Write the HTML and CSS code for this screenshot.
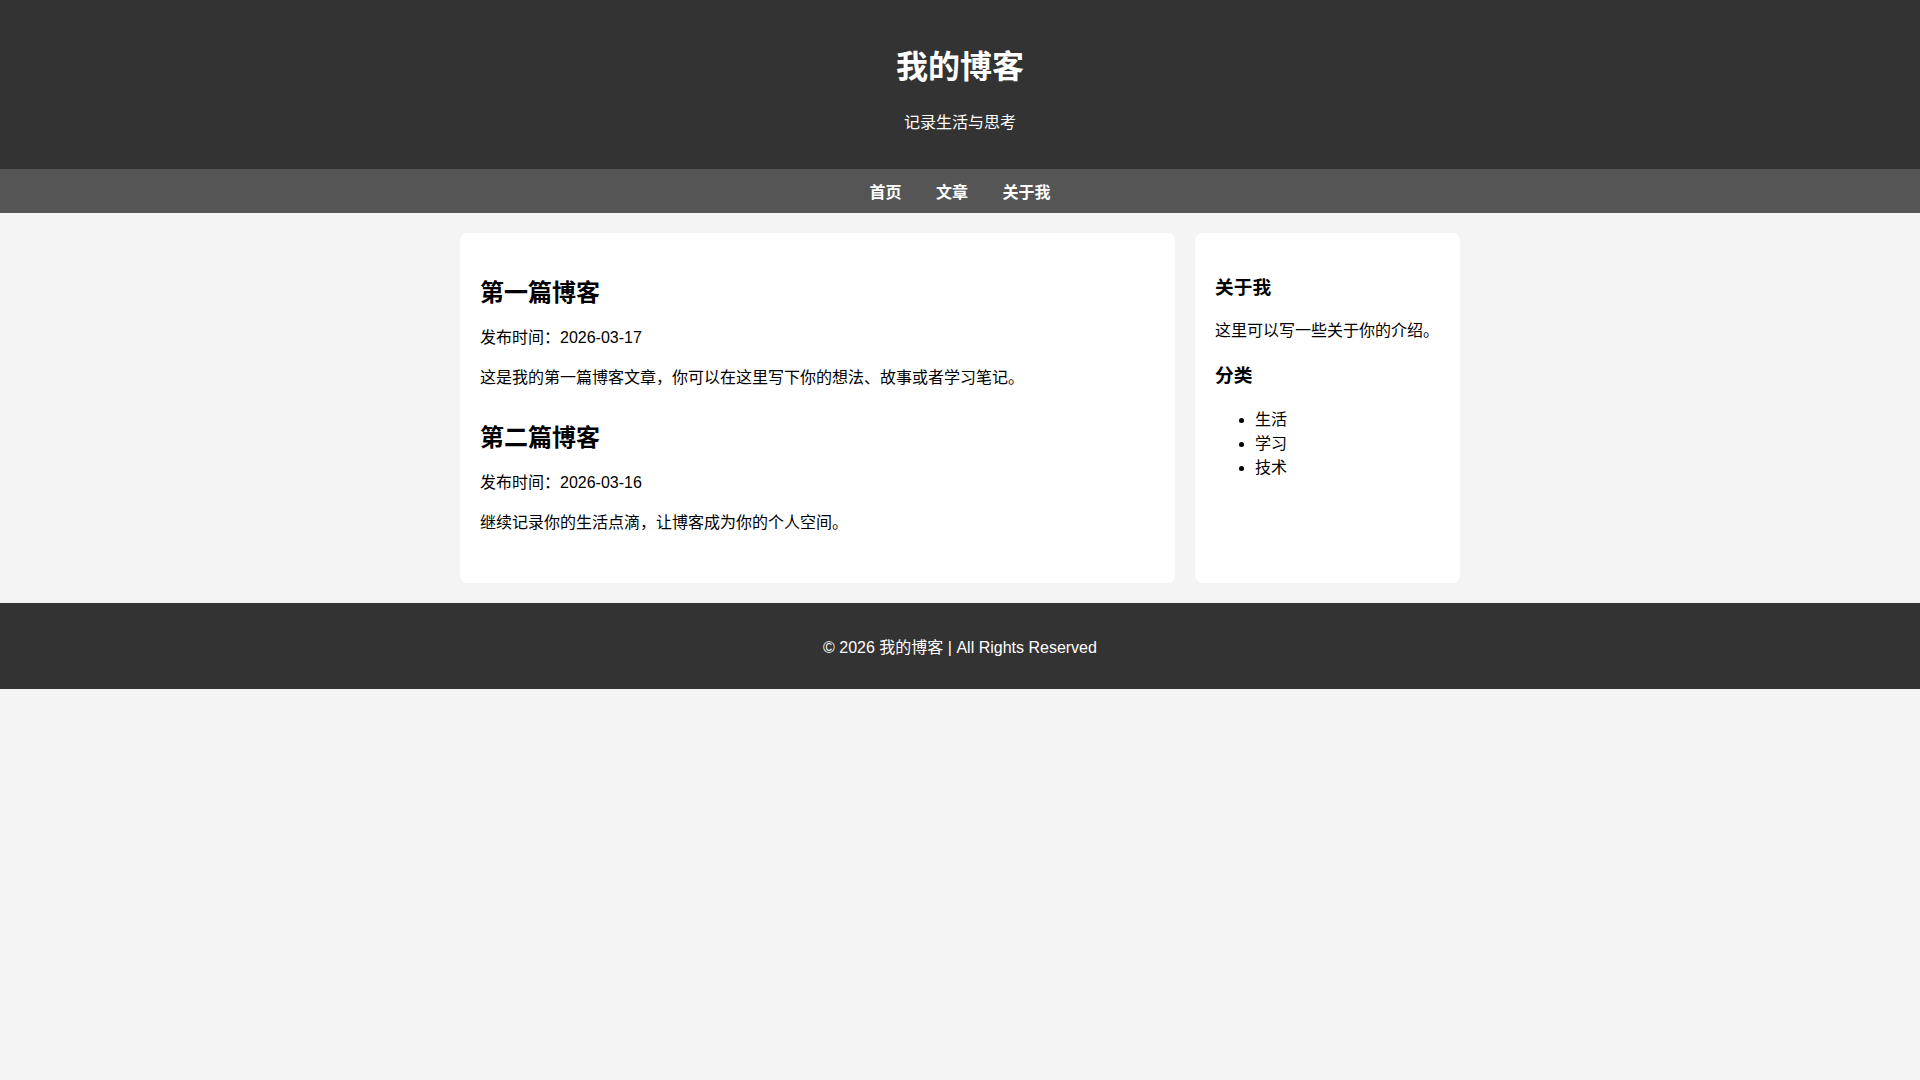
FILE: index.html
```html
<!DOCTYPE html>
<html lang="zh-CN">
<head>
<meta charset="UTF-8">
<title>我的博客</title>
<link rel="stylesheet" href="styles.css">
</head>
<body>
<header class="site-header">
  <h1 class="site-title">我的博客</h1>
  <p class="site-subtitle">记录生活与思考</p>
</header>
<nav class="site-nav">
  <a href="#">首页</a>
  <a href="#">文章</a>
  <a href="#">关于我</a>
</nav>
<div class="container">
  <main class="content">
    <article class="post">
      <h2>第一篇博客</h2>
      <p class="date">发布时间：2026-03-17</p>
      <p>这是我的第一篇博客文章，你可以在这里写下你的想法、故事或者学习笔记。</p>
    </article>
    <article class="post">
      <h2>第二篇博客</h2>
      <p class="date">发布时间：2026-03-16</p>
      <p>继续记录你的生活点滴，让博客成为你的个人空间。</p>
    </article>
  </main>
  <aside class="sidebar">
    <h3>关于我</h3>
    <p>这里可以写一些关于你的介绍。</p>
    <h3>分类</h3>
    <ul>
      <li>生活</li>
      <li>学习</li>
      <li>技术</li>
    </ul>
  </aside>
</div>
<footer class="site-footer">
  <p>© 2026 我的博客 | All Rights Reserved</p>
</footer>
</body>
</html>
```

FILE: styles.css
```css
body {
  margin: 0;
  font-family: "Liberation Sans", Arial, "Noto Sans CJK SC", sans-serif;
  background: #f4f4f4;
  color: #000;
}

.site-header {
  background: #333;
  color: #fff;
  text-align: center;
  padding: 20px;
}

.site-nav {
  background: #555;
  text-align: center;
  padding: 10px 0;
}

.site-nav a {
  color: #fff;
  text-decoration: none;
  font-weight: bold;
  margin: 0 15px;
}

.container {
  display: flex;
  gap: 20px;
  width: 1000px;
  margin: 20px auto;
}

.content {
  flex: 3;
  background: #fff;
  padding: 20px;
  border-radius: 8px;
}

.post {
  margin-bottom: 30px;
}

.post h2 {
  margin-bottom: 10px;
}

.sidebar {
  flex: 1;
  background: #fff;
  padding: 20px;
  border-radius: 8px;
}

.site-footer {
  background: #333;
  color: #fff;
  text-align: center;
  padding: 15px;
}
```
